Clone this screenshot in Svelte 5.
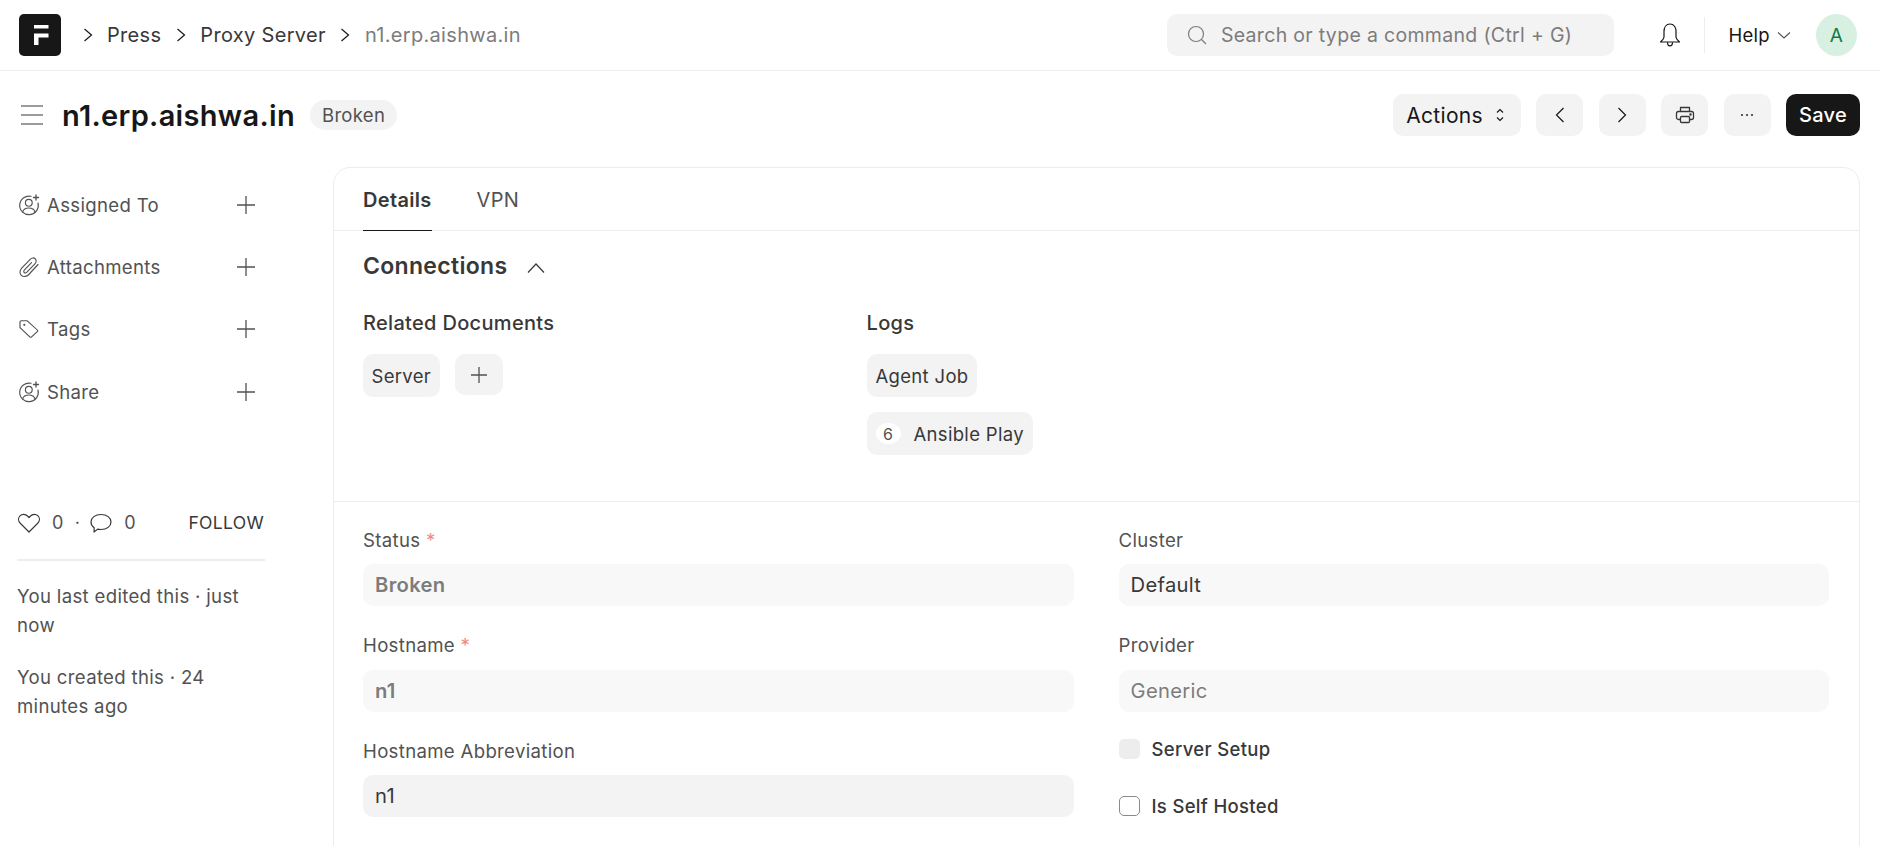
<script lang="ts">
  const sideItems = [
    { label: 'Assigned To', icon: 'user' },
    { label: 'Attachments', icon: 'clip' },
    { label: 'Tags', icon: 'tag' },
    { label: 'Share', icon: 'user' }
  ]
</script>

<div class="page">
  <header class="navbar">
    <div class="logo">
      <svg viewBox="0 0 42 42" width="42" height="42"><path fill="#fff" d="M15 11h14.500v3.500H15zM15 19.500h14.500v4H19.500V31H15z"/></svg>
    </div>
    <nav class="crumbs">
      <svg class="crumb-sep" viewBox="0 0 10 14"><path d="M1.500 1 8.500 7l-7 6"/></svg>
      <span>Press</span>
      <svg class="crumb-sep" viewBox="0 0 10 14"><path d="M1.500 1 8.500 7l-7 6"/></svg>
      <span>Proxy Server</span>
      <svg class="crumb-sep" viewBox="0 0 10 14"><path d="M1.500 1 8.500 7l-7 6"/></svg>
      <span class="crumb-last">n1.erp.aishwa.in</span>
    </nav>
    <div class="search">
      <svg viewBox="0 0 20 20" width="20" height="20" fill="none" stroke="#7c7c7c" stroke-width="1.200"><circle cx="9" cy="9" r="7.500"/><path d="m14.500 14.500 4.500 4.500"/></svg>
      <span>Search or type a command (Ctrl + G)</span>
    </div>
    <svg class="bell" viewBox="0 0 24 24" width="24" height="24" fill="none" stroke="#171717" stroke-width="1.200" stroke-linejoin="round"><path d="M12 1C8 1 6 4.500 6 8.500V14c0 2-2 3.500-3.500 5h19c-1.500-1.500-3.500-3-3.500-5V8.500C18 4.500 16 1 12 1Z"/><path d="M9.500 19.200c0 2.200 1 3.600 2.500 3.600s2.500-1.400 2.500-3.600"/></svg>
    <div class="nav-div"></div>
    <div class="help">Help
      <svg viewBox="0 0 14 10" width="14" height="10" fill="none" stroke="#525252" stroke-width="1.100"><path d="M1 2.500 7 8l6-5.500"/></svg>
    </div>
    <div class="avatar">A</div>
  </header>

  <div class="page-head">
    <svg class="menu" viewBox="0 0 22 20" width="22" height="20" fill="none" stroke="#383838" stroke-width="1.100"><path d="M0 1h22M0 10h22M0 19h22"/></svg>
    <h1>n1.erp.aishwa.in</h1>
    <span class="pill">Broken</span>
    <div class="actions">
      <button class="btn actions-btn">Actions
        <svg viewBox="0 0 10 16" width="10" height="16" fill="none" stroke="#171717" stroke-width="1.200"><path d="M2 5.500 5 2.500l3 3M2 10.500l3 3 3-3"/></svg>
      </button>
      <button class="btn icon-btn" aria-label="Previous"><svg viewBox="0 0 12 20" width="12" height="20" fill="none" stroke="#171717" stroke-width="1.200"><path d="M9.500 3 2.500 10l7 7"/></svg></button>
      <button class="btn icon-btn" aria-label="Next"><svg viewBox="0 0 12 20" width="12" height="20" fill="none" stroke="#171717" stroke-width="1.200"><path d="m2.500 3 7 7-7 7"/></svg></button>
      <button class="btn icon-btn" aria-label="Print"><svg viewBox="0 0 20 20" width="20" height="20" fill="none" stroke="#383838" stroke-width="1.300" stroke-linejoin="round"><path d="M5.500 6.500V2.500h9v4"/><rect x="1.500" y="6.500" width="17" height="8" rx="2"/><rect x="5.500" y="11.500" width="9" height="6" rx="1" fill="#f3f3f3"/><circle cx="15.500" cy="9.500" r=".6" fill="#383838"/></svg></button>
      <button class="btn icon-btn" aria-label="More"><svg viewBox="0 0 20 20" width="20" height="20" fill="#383838"><circle cx="5" cy="10" r="1.100"/><circle cx="10" cy="10" r="1.100"/><circle cx="15" cy="10" r="1.100"/></svg></button>
      <button class="btn save">Save</button>
    </div>
  </div>

  <div class="layout">
    <aside class="sidebar">
      {#each sideItems as item}
        <div class="side-row">
          {#if item.icon === 'user'}
            <svg viewBox="0 0 22 22" width="22" height="22" fill="none" stroke="#525252" stroke-width="1.150" stroke-linecap="round"><path d="M13 2.300A9.300 9.300 0 1 0 20 9"/><circle cx="10.800" cy="8.800" r="3.400"/><path d="M4.600 18c.8-2.800 3-4 6.200-4s5.400 1.200 6.200 4"/><path d="M18 1v5M15.500 3.500h5" stroke-width="1.300"/></svg>
          {:else if item.icon === 'clip'}
            <svg viewBox="0 0 22 22" width="22" height="22" fill="none" stroke="#525252" stroke-width="1.150" stroke-linecap="round"><path d="M20 8.500 10.800 18.500c-2.100 2.300-5.600 2.600-7.500.8s-1.700-5 .4-7.200l8.500-8.800c1.500-1.600 3.800-1.800 5.100-.5s1.100 3.600-.4 5.100l-8 8.300c-.8.800-2 .9-2.700.3s-.5-1.900.3-2.700l7-7.200"/></svg>
          {:else}
            <svg viewBox="0 0 22 22" width="22" height="22" fill="none" stroke="#525252" stroke-width="1.150" stroke-linejoin="round"><path d="M2.500 3.800c0-.7.600-1.300 1.300-1.300h6l10 10c.5.500.5 1.300 0 1.800l-5.700 5.700c-.5.500-1.300.5-1.800 0L2.500 10Z" transform="translate(-.5 .5) scale(1 .92)"/><circle cx="6.300" cy="6.800" r="1.100" fill="#525252" stroke="none"/></svg>
          {/if}
          <span class="side-label">{item.label}</span>
          <svg class="side-plus" viewBox="0 0 18 18" width="18" height="18" stroke="#525252" stroke-width="1.300"><path d="M9 0v18M0 9h18"/></svg>
        </div>
      {/each}

      <div class="stats">
        <svg viewBox="0 0 24 22" width="24" height="22" fill="none" stroke="#383838" stroke-width="1.200" stroke-linejoin="round"><path d="M12 20 3.500 11.500C1 9 1 5.800 3 3.800s5.500-2 7.500.2L12 5.500 13.500 4c2-2.200 5.500-2.200 7.500-.2s2 5.200-.5 7.700Z"/></svg>
        <span class="stat-num">0</span>
        <span class="stat-dot">·</span>
        <svg viewBox="0 0 24 22" width="24" height="22" fill="none" stroke="#383838" stroke-width="1.200" stroke-linejoin="round"><path d="M12 2.500c5.800 0 10 3.200 10 7.500s-4.200 7.500-10 7.500c-1.200 0-2.300-.1-3.300-.4L5 20l.2-4.300C3 14.300 2 12.300 2 10c0-4.300 4.200-7.500 10-7.500Z"/></svg>
        <span class="stat-num">0</span>
        <span class="follow">FOLLOW</span>
      </div>
      <div class="side-line"></div>
      <p class="side-text">You last edited this · just now</p>
      <p class="side-text">You created this · 24 minutes ago</p>
    </aside>

    <main class="card">
      <div class="tabs">
        <div class="tab tab-on">Details</div>
        <div class="tab">VPN</div>
      </div>

      <section class="connections">
        <div class="conn-head">
          <h2>Connections</h2>
          <svg viewBox="0 0 18 12" width="18" height="12" fill="none" stroke="#383838" stroke-width="1.200"><path d="M1 10.500 9 2l8 8.500"/></svg>
        </div>
        <div class="conn-cols">
          <div class="conn-col">
            <div class="conn-title">Related Documents</div>
            <div class="link-row">
              <span class="link-btn">Server</span>
              <span class="link-add"><svg viewBox="0 0 18 18" width="18" height="18" stroke="#525252" stroke-width="1.300"><path d="M9 1v16M1 9h16"/></svg></span>
            </div>
          </div>
          <div class="conn-col">
            <div class="conn-title">Logs</div>
            <div class="link-stack">
              <span class="link-btn">Agent Job</span>
              <span class="link-btn link-count"><span class="count">6</span>Ansible Play</span>
            </div>
          </div>
        </div>
      </section>

      <section class="fields">
        <div class="col">
          <div class="field">
            <div class="label">Status <span class="req">*</span></div>
            <div class="input ro strong">Broken</div>
          </div>
          <div class="field">
            <div class="label">Hostname <span class="req">*</span></div>
            <div class="input ro strong">n1</div>
          </div>
          <div class="field">
            <div class="label">Hostname Abbreviation</div>
            <div class="input edit">n1</div>
          </div>
        </div>
        <div class="col">
          <div class="field">
            <div class="label">Cluster</div>
            <div class="input ro dark">Default</div>
          </div>
          <div class="field">
            <div class="label">Provider</div>
            <div class="input ro">Generic</div>
          </div>
          <label class="check first"><span class="box box-off"></span>Server Setup</label>
          <label class="check"><span class="box"></span>Is Self Hosted</label>
        </div>
      </section>
    </main>
  </div>
</div>

<style>
  :global(body) {
    margin: 0;
    background: #fff;
    font-family: Inter, "Noto Sans", sans-serif;
    letter-spacing: 0.02em;
    color: #383838;
  }
  .page { height: 846px; overflow: hidden; }

  .navbar {
    display: flex;
    align-items: center;
    height: 71px;
    box-sizing: border-box;
    padding: 0 23px 0 19px;
    border-bottom: 1px solid #ededed;
  }
  .logo {
    width: 42px;
    height: 42px;
    border-radius: 5px;
    background: #171717;
  }
  .logo svg { display: block; }
  .crumbs {
    display: flex;
    align-items: center;
    margin-left: 21.500px;
    font-size: 20px;
    color: #383838;
  }
  .crumb-sep { width: 10px; height: 14px; fill: none; stroke: #171717; stroke-width: 1.200; margin-right: 14.500px; }
  .crumbs span { margin-right: 14.500px; }
  .crumb-last { color: #7c7c7c; }
  .search {
    display: flex;
    align-items: center;
    gap: 14px;
    width: 447px;
    height: 42px;
    box-sizing: border-box;
    padding-left: 20px;
    margin-left: auto;
    background: #f3f3f3;
    border-radius: 10px;
    font-size: 19.500px;
    color: #7c7c7c;
  }
  .bell { margin-left: 44.500px; }
  .nav-div { width: 1px; height: 36px; background: #ededed; margin-left: 22px; }
  .help {
    display: flex;
    align-items: center;
    gap: 7px;
    margin-left: 23px;
    font-size: 18.500px;
    color: #171717;
  }
  .avatar {
    width: 41px;
    height: 42px;
    margin-left: 25px;
    border-radius: 50%;
    background: #d8f0e1;
    color: #137949;
    font-size: 19px;
    display: flex;
    align-items: center;
    justify-content: center;
  }

  .page-head {
    display: flex;
    align-items: center;
    height: 96px;
    box-sizing: border-box;
    padding: 12px 20px 20px 21px;
  }
  .menu { margin-right: 19px; }
  h1 {
    margin: 0;
    font-size: 29px;
    font-weight: 600;
    color: #171717;
  }
  .pill {
    margin-left: 15px;
    padding: 0 12px;
    height: 30px;
    line-height: 30px;
    border-radius: 15px;
    background: #f3f3f3;
    font-size: 18.500px;
    color: #525252;
  }
  .actions { display: flex; gap: 15.400px; margin-left: auto; }
  .btn {
    display: flex;
    align-items: center;
    justify-content: center;
    height: 42px;
    padding: 0;
    border: none;
    border-radius: 10px;
    background: #f3f3f3;
    font: inherit;
    letter-spacing: inherit;
    font-size: 21px;
    color: #171717;
  }
  .actions-btn { width: 128px; gap: 12px; padding-right: 3px; box-sizing: border-box; }
  .icon-btn { width: 47px; }
  .save { width: 74px; background: #171717; color: #fff; font-weight: 500; font-size: 20px; }

  .layout { display: flex; align-items: flex-start; }
  .sidebar { width: 248px; margin-left: 17px; padding-top: 6.500px; }
  .side-row {
    display: flex;
    align-items: center;
    height: 62.300px;
    margin-left: 1px;
    color: #525252;
    font-size: 18.600px;
  }
  .side-label { margin-left: 7px; }
  .side-plus { margin-left: auto; margin-right: 10px; }
  .stats {
    display: flex;
    align-items: center;
    margin-top: 85px;
    font-size: 18px;
    height: 30px;
    color: #525252;
  }
  .stat-num { margin: 0 11px 0 11px; }
  .stat-dot { margin-right: 9px; }
  .follow { margin-left: auto; margin-right: 1px; color: #383838; font-size: 17.500px; }
  .side-line { height: 2px; background: #ededed; margin-top: 21px; margin-bottom: 21px; }
  .side-text {
    margin: 0 0 23.500px;
    font-size: 18.600px;
    line-height: 29px;
    color: #525252;
  }

  .card {
    flex: 1;
    margin-left: 68px;
    margin-right: 20px;
    border: 1px solid #ededed;
    border-radius: 17px;
    height: 900px;
    box-sizing: border-box;
  }
  .tabs {
    display: flex;
    gap: 45px;
    height: 63px;
    box-sizing: border-box;
    padding-left: 29px;
    border-bottom: 1px solid #ededed;
  }
  .tab {
    height: 62px;
    line-height: 64px;
    box-sizing: border-box;
    font-size: 20px;
    color: #525252;
  }
  .tab-on { color: #383838; font-weight: 600; border-bottom: 1px solid #171717; height: 63px; }
  .connections {
    padding: 0 29px;
    height: 271px;
    box-sizing: border-box;
    border-bottom: 1px solid #ededed;
  }
  .conn-head { display: flex; align-items: center; height: 70px; gap: 20px; }
  h2 { margin: 0; font-size: 23px; font-weight: 600; color: #383838; }
  .conn-head svg { margin-top: 4px; }
  .conn-cols { display: flex; margin-top: 11px; }
  .conn-col { width: 503.500px; }
  .conn-title { font-size: 20px; font-weight: 500; color: #383838; line-height: 22px; }
  .link-row { display: flex; gap: 15px; margin-top: 20px; align-items: flex-start; }
  .link-stack { display: flex; flex-direction: column; align-items: flex-start; gap: 15px; margin-top: 20px; }
  .link-btn {
    display: flex;
    align-items: center;
    height: 43px;
    padding: 0 9px;
    border-radius: 10px;
    background: #f3f3f3;
    font-size: 18.500px;
    color: #383838;
  }
  .link-row .link-btn { padding: 0 8.500px; }
  .link-add {
    display: flex;
    align-items: center;
    justify-content: center;
    width: 48px;
    height: 41px;
    border-radius: 10px;
    background: #f3f3f3;
  }
  .count {
    display: flex;
    align-items: center;
    justify-content: center;
    width: 25px;
    height: 21px;
    margin-right: 13px;
    border-radius: 50%;
    background: #fff;
    font-size: 16px;
    color: #525252;
  }
  .fields { display: flex; gap: 45px; padding: 25.500px 30px 0 29px; }
  .col { flex: 1; min-width: 0; }
  .field { margin-bottom: 27px; }
  .label { font-size: 18.600px; color: #525252; line-height: 25px; margin-bottom: 11.500px; }
  .req { color: #e88; }
  .input {
    height: 42px;
    line-height: 41px;
    box-sizing: border-box;
    padding: 0 12px;
    border-radius: 10px;
    font-size: 20.200px;
  }
  .ro { background: #f8f8f8; color: #7c7c7c; }
  .strong { font-weight: 600; }
  .dark { color: #383838; }
  .edit { background: #f3f3f3; color: #383838; }
  .check {
    display: flex;
    align-items: center;
    height: 26px;
    margin-bottom: 31px;
    font-size: 18.500px;
    font-weight: 500;
    color: #383838;
  }
  .check.first { margin-top: -2.300px; }
  .box {
    width: 21px;
    height: 20px;
    margin-right: 12px;
    box-sizing: border-box;
    border: 1px solid #8a8a8a;
    border-radius: 5px;
  }
  .box-off { border: none; background: #ededed; }
</style>
